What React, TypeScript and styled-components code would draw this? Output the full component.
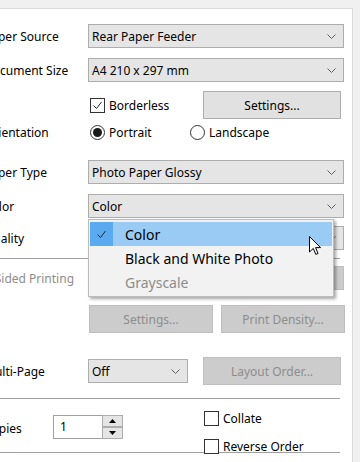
import React from 'react';
import styled, { createGlobalStyle } from 'styled-components';

const GlobalStyle = createGlobalStyle`
  html, body {
    margin: 0;
    padding: 0;
  }
  body {
    width: 360px;
    height: 462px;
    overflow: hidden;
    background: #f0f0f0;
    font-family: 'Noto Sans', 'Open Sans', sans-serif;
    font-size: 12px;
    color: #000;
  }
`;

const Page = styled.div`
  height: 462px;
  padding-top: 8px;
  box-sizing: border-box;
  overflow: hidden;
`;

const Panel = styled.div`
  margin-left: -20px;
  width: 373px;
  height: 480px;
  box-sizing: border-box;
  background: #fff;
  border: 1px solid #d9d9d9;
  padding: 15px 8px 0 0;
`;

const Row = styled.div<{ $mt?: number; $h: number }>`
  display: grid;
  grid-template-columns: 107px 1fr;
  align-items: center;
  height: ${(p) => p.$h}px;
  margin-top: ${(p) => p.$mt ?? 0}px;
`;

const Label = styled.div<{ $disabled?: boolean }>`
  padding-left: 3px;
  white-space: nowrap;
  color: ${(p) => (p.$disabled ? '#8c8c8c' : '#000')};
`;

const Cell = styled.div`
  position: relative;
  display: flex;
  align-items: center;
  height: 100%;
`;

const Combo = styled.div<{ $w?: number; $disabled?: boolean }>`
  display: flex;
  align-items: center;
  box-sizing: border-box;
  width: ${(p) => (p.$w ? `${p.$w}px` : '100%')};
  height: 24px;
  padding: 0 7px 0 3px;
  background: ${(p) => (p.$disabled ? '#cccccc' : '#e5e5e5')};
  border: 1px solid ${(p) => (p.$disabled ? '#bfbfbf' : '#adadad')};
  white-space: nowrap;
`;

const ComboText = styled.span`
  flex: 1;
`;

const Button = styled.div<{ $w: number; $disabled?: boolean; $ml?: string; $mr?: number }>`
  display: flex;
  align-items: center;
  justify-content: center;
  box-sizing: border-box;
  width: ${(p) => p.$w}px;
  height: 28px;
  margin-left: ${(p) => p.$ml ?? '0'};
  margin-right: ${(p) => p.$mr ?? 0}px;
  background: ${(p) => (p.$disabled ? '#cccccc' : '#e1e1e1')};
  border: 1px solid ${(p) => (p.$disabled ? '#bfbfbf' : '#adadad')};
  color: ${(p) => (p.$disabled ? '#8d8d8d' : '#000')};
`;

const Choice = styled.label<{ $w?: number; $ml?: number }>`
  display: flex;
  align-items: center;
  gap: 4px;
  width: ${(p) => (p.$w ? `${p.$w}px` : 'auto')};
  margin-left: ${(p) => p.$ml ?? 0}px;
  white-space: nowrap;
`;

const Box = styled.span`
  display: flex;
  align-items: center;
  justify-content: center;
  box-sizing: border-box;
  width: 15px;
  height: 15px;
  border: 1px solid #333;
  background: #fff;
  flex: none;
`;

const Radio = styled.span<{ $on?: boolean }>`
  display: flex;
  align-items: center;
  justify-content: center;
  box-sizing: border-box;
  width: 15px;
  height: 15px;
  border-radius: 50%;
  border: 1px solid #333;
  background: #fff;
  flex: none;

  &::after {
    content: '';
    display: ${(p) => (p.$on ? 'block' : 'none')};
    width: 9px;
    height: 9px;
    border-radius: 50%;
    background: #1a1a1a;
  }
`;

const Separator = styled.div<{ $mt: number }>`
  height: 1px;
  margin: ${(p) => p.$mt}px 4px 0 0;
  background: #a0a0a0;
`;

const Popup = styled.div`
  position: absolute;
  top: 25px;
  left: 0;
  z-index: 5;
  width: 246px;
  box-sizing: border-box;
  padding: 2px 1px;
  background: #f2f2f2;
  border: 1px solid #bcbcbc;
  box-shadow: 2px 2px 3px rgba(0, 0, 0, 0.35);
  font-size: 14px;
`;

const Item = styled.div<{ $active?: boolean; $disabled?: boolean }>`
  display: flex;
  align-items: center;
  height: 24px;
  background: ${(p) => (p.$active ? '#99cbf5' : 'transparent')};
  color: ${(p) => (p.$disabled ? '#8c8c8c' : '#000')};
  white-space: nowrap;
`;

const CheckCell = styled.span<{ $active?: boolean }>`
  display: flex;
  align-items: center;
  justify-content: center;
  width: 23px;
  height: 100%;
  margin-right: 12px;
  background: ${(p) => (p.$active ? '#5aaaf0' : 'transparent')};
`;

const Cursor = styled.svg`
  position: absolute;
  left: 220px;
  top: 16px;
  z-index: 6;
`;

const CopiesRow = styled.div`
  display: grid;
  grid-template-columns: 72px 151px 1fr;
  margin-top: 11px;
  height: 42px;
`;

const CopiesLabel = styled(Label)`
  margin-top: 10px;
`;

const Spin = styled.div`
  display: flex;
  box-sizing: border-box;
  width: 70px;
  height: 24px;
  margin-top: 5px;
  border: 1px solid #a0a0a0;
  background: #fff;
`;

const SpinValue = styled.span`
  flex: 1;
  padding-left: 6px;
  line-height: 22px;
`;

const SpinButtons = styled.div`
  display: flex;
  flex-direction: column;
  width: 20px;
`;

const SpinButton = styled.div`
  flex: 1;
  display: flex;
  align-items: center;
  justify-content: center;
  background: #e5e5e5;
  border: 1px solid #adadad;
  margin: -1px -1px 0 0;
  & + & {
    margin-top: 0;
    margin-bottom: -1px;
  }
`;

const CheckColumn = styled.div`
  display: flex;
  flex-direction: column;
  gap: 11px;
`;

const Chevron = () => (
  <svg width="9" height="5" viewBox="0 0 9 5">
    <polyline points="0.5,0.5 4.5,4.5 8.5,0.5" fill="none" stroke="#606060" strokeWidth="1" />
  </svg>
);

const Tick = ({ size = 11 }: { size?: number }) => (
  <svg width={size} height={size} viewBox="0 0 11 11">
    <polyline points="1.5,5.5 4.5,8.5 9.5,2" fill="none" stroke="#222" strokeWidth="1" />
  </svg>
);

const Arrow = ({ up }: { up?: boolean }) => (
  <svg width="7" height="4" viewBox="0 0 7 4">
    <polygon points={up ? '0,4 7,4 3.5,0' : '0,0 7,0 3.5,4'} fill="#000" />
  </svg>
);

const colorOptions = [
  { name: 'Color', active: true },
  { name: 'Black and White Photo' },
  { name: 'Grayscale', disabled: true },
];

const App = () => {
  return (
    <>
      <GlobalStyle />
      <Page>
        <Panel>
          <Row $h={24}>
            <Label>Paper Source</Label>
            <Combo>
              <ComboText>Rear Paper Feeder</ComboText>
              <Chevron />
            </Combo>
          </Row>
          <Row $mt={10} $h={24}>
            <Label>Document Size</Label>
            <Combo>
              <ComboText>A4 210 x 297 mm</ComboText>
              <Chevron />
            </Combo>
          </Row>
          <Row $mt={9} $h={28}>
            <span />
            <Cell>
              <Choice $ml={2}>
                <Box>
                  <Tick />
                </Box>
                Borderless
              </Choice>
              <Button $w={138} $ml="auto" $mr={3}>
                Settings...
              </Button>
            </Cell>
          </Row>
          <Row $mt={5} $h={15}>
            <Label>Orientation</Label>
            <Cell>
              <Choice $w={100} $ml={2}>
                <Radio $on />
                Portrait
              </Choice>
              <Choice>
                <Radio />
                Landscape
              </Choice>
            </Cell>
          </Row>
          <Row $mt={21} $h={24}>
            <Label>Paper Type</Label>
            <Combo>
              <ComboText>Photo Paper Glossy</ComboText>
              <Chevron />
            </Combo>
          </Row>
          <Row $mt={10} $h={24}>
            <Label>Color</Label>
            <Cell>
              <Combo>
                <ComboText>Color</ComboText>
                <Chevron />
              </Combo>
              <Popup>
                {colorOptions.map(({ name, active, disabled }) => (
                  <Item key={name} $active={active} $disabled={disabled}>
                    <CheckCell $active={active}>{active && <Tick />}</CheckCell>
                    {name}
                  </Item>
                ))}
                <Cursor width="13" height="20" viewBox="0 0 13 20">
                  <path
                    d="M0.5 0.5 L0.5 16 L4.3 12.4 L6.8 18.4 L9 17.5 L6.6 11.6 L11.6 11.6 Z"
                    fill="#fff"
                    stroke="#000"
                    strokeWidth="1"
                    strokeLinejoin="round"
                  />
                </Cursor>
              </Popup>
            </Cell>
          </Row>
          <Row $mt={8} $h={24}>
            <Label>Quality</Label>
            <Combo>
              <ComboText>Standard</ComboText>
              <Chevron />
            </Combo>
          </Row>
          <Separator $mt={8} />
          <Row $mt={7} $h={24}>
            <Label $disabled>2-Sided Printing</Label>
            <Combo $disabled />
          </Row>
          <Row $mt={15} $h={28}>
            <span />
            <Cell>
              <Button $w={124} $ml="1px" $disabled>
                Settings...
              </Button>
              <Button $w={124} $ml="8px" $disabled>
                Print Density...
              </Button>
            </Cell>
          </Row>
          <Row $mt={24} $h={28}>
            <Label>Multi-Page</Label>
            <Cell>
              <Combo $w={100}>
                <ComboText>Off</ComboText>
                <Chevron />
              </Combo>
              <Button $w={138} $ml="auto" $mr={3} $disabled>
                Layout Order...
              </Button>
            </Cell>
          </Row>
          <Separator $mt={13} />
          <CopiesRow>
            <CopiesLabel>Copies</CopiesLabel>
            <Spin>
              <SpinValue>1</SpinValue>
              <SpinButtons>
                <SpinButton>
                  <Arrow up />
                </SpinButton>
                <SpinButton>
                  <Arrow />
                </SpinButton>
              </SpinButtons>
            </Spin>
            <CheckColumn>
              <Choice>
                <Box />
                Collate
              </Choice>
              <Choice>
                <Box />
                Reverse Order
              </Choice>
            </CheckColumn>
          </CopiesRow>
          <Separator $mt={0} />
        </Panel>
      </Page>
    </>
  );
};

export default App;
